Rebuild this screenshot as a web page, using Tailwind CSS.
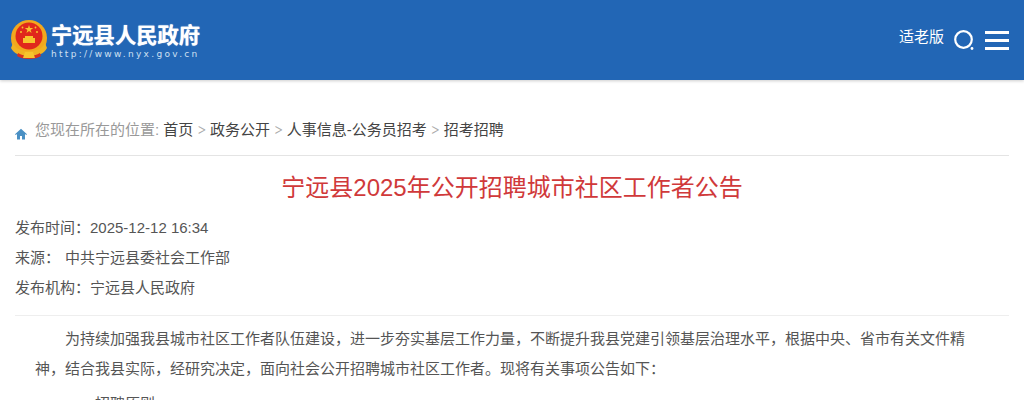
<!DOCTYPE html>
<html lang="zh-CN">
<head>
    <meta charset="UTF-8">
    <meta name="viewport" content="width=device-width, initial-scale=1.0">
    <title>宁远县2025年公开招聘城市社区工作者公告</title>
    <script src="https://cdn.jsdelivr.net/npm/@tailwindcss/browser@4"></script>
</head>
<body class="bg-white h-[400px] overflow-hidden font-['Liberation_Sans','Noto_Sans_CJK_SC',sans-serif]">
    <!-- header -->
    <header class="h-20 bg-[#2266b5] shadow-[0_1px_3px_rgba(0,0,0,0.2)] flex items-center justify-between pl-[10px] pr-[15px]">
        <div class="flex items-center gap-[3px]">
            <svg class="w-[38px] h-[40px]" viewBox="0 0 38 40">
                <circle cx="19" cy="18" r="18" fill="#f2a81d"/>
                <circle cx="19" cy="16" r="13.500" fill="#e0281c"/>
                <polygon points="19,5 20,8 23.200,8 20.600,9.900 21.600,12.900 19,11 16.400,12.900 17.400,9.900 14.800,8 18,8" fill="#f7c52d"/>
                <circle cx="11" cy="12" r="1" fill="#f7c52d"/>
                <circle cx="27" cy="12" r="1" fill="#f7c52d"/>
                <circle cx="12.500" cy="7.500" r=".9" fill="#f7c52d"/>
                <circle cx="25.500" cy="7.500" r=".9" fill="#f7c52d"/>
                <path d="M15 16h8v2h2v5H13v-5h2z" fill="#f7c52d"/>
                <path d="M3 23c3 6 8 8 16 8s13-2 16-8l2 5c-3 6-9 8-18 8S4 34 1 28z" fill="#f0b323"/>
                <path d="M8 33c3 2 7 3 11 3s8-1 11-3l1 3c-3 2-7 3-12 3s-9-1-12-3z" fill="#d9301f"/>
                <path d="M15 32h8l2 6H13z" fill="#f7c52d"/>
            </svg>
            <div class="flex flex-col text-white mt-[4px]">
                <span class="text-[21.300px] leading-[24px] font-bold [text-shadow:0_0_1px_#fff]">宁远县人民政府</span>
                <span class="text-[9px] leading-[12px] tracking-[2.300px] text-[#cfe0f2] font-['DejaVu_Sans',sans-serif]">http://www.nyx.gov.cn</span>
            </div>
        </div>
        <div class="flex items-center text-white">
            <span class="text-[15px] leading-5 -mt-[7px] mr-[9px]">适老版</span>
            <svg class="w-[22px] h-[22px] mr-[10px]" viewBox="0 0 22 22" fill="none">
                <circle cx="10.500" cy="10.500" r="8.300" stroke="#fff" stroke-width="2.200"/>
                <circle cx="19" cy="19.500" r="1.400" fill="#fff"/>
            </svg>
            <div class="w-[24px] flex flex-col gap-[5px]">
                <div class="h-[3px] bg-white"></div>
                <div class="h-[3px] bg-white"></div>
                <div class="h-[3px] bg-white"></div>
            </div>
        </div>
    </header>

    <main class="px-[15px]">
        <!-- breadcrumb -->
        <div class="mt-[35px] h-[41px] border-b border-[#e4e4e4] flex items-start text-[15px] leading-[30px] text-[#444]">
            <svg class="w-3 h-3 mt-[13px] mr-2" viewBox="0 0 12 12" fill="#4a90c4"><path d="M6 .8 0 6.200l.8.900L2 6.100V11.500h3V8h2v3.500h3V6.100l1.200 1 .8-.9z"/></svg>
            <span class="text-[#999]">您现在所在的位置:</span>
            <span class="ml-1">首页</span><span class="mx-[3.500px] text-[#aaa] font-light font-['Inter']">&gt;</span>
            <span>政务公开</span><span class="mx-[3.500px] text-[#aaa] font-light font-['Inter']">&gt;</span>
            <span>人事信息-公务员招考</span><span class="mx-[3.500px] text-[#aaa] font-light font-['Inter']">&gt;</span>
            <span>招考招聘</span>
        </div>

        <h1 class="mt-[16px] text-center text-[24px] leading-[32px] text-[#d0393a]">宁远县2025年公开招聘城市社区工作者公告</h1>

        <!-- meta -->
        <div class="mt-[9px] pb-[12px] border-b border-[#eee] text-[15px] leading-[30px] text-[#555]">
            <p>发布时间：2025-12-12 16:34</p>
            <p>来源：<span class="ml-[5px]">中共宁远县委社会工作部</span></p>
            <p>发布机构：宁远县人民政府</p>
        </div>

        <!-- body -->
        <div class="mt-[8px] pl-[20px] pr-[44px] text-[15px] leading-[30px] text-[#555]">
            <p class="indent-[30px]">为持续加强我县城市社区工作者队伍建设，进一步夯实基层工作力量，不断提升我县党建引领基层治理水平，根据中央、省市有关文件精神，结合我县实际，经研究决定，面向社会公开招聘城市社区工作者。现将有关事项公告如下：</p>
            <p class="indent-[60px] mt-[5px]">招聘原则</p>
        </div>
    </main>
</body>
</html>
